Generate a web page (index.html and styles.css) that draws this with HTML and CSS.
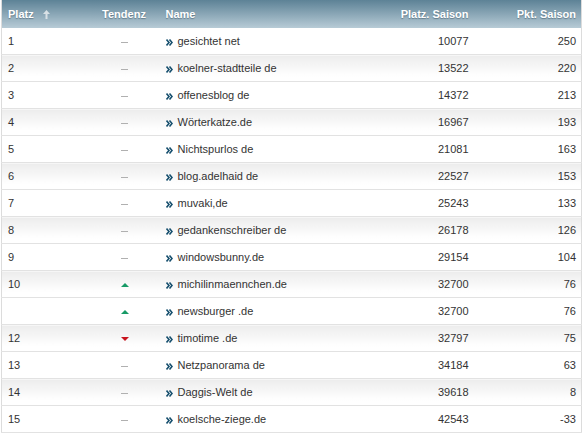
FILE: index.html
```html
<!DOCTYPE html>
<html lang="de">
<head>
<meta charset="utf-8">
<title>Ranking</title>
<link rel="stylesheet" href="styles.css">
</head>
<body>
<table class="rank">
  <colgroup>
    <col class="c-platz"><col class="c-tend"><col class="c-name"><col class="c-ps"><col class="c-pkt">
  </colgroup>
  <thead>
    <tr>
      <th class="left">Platz <svg class="sort" width="7" height="9" viewBox="0 0 7 9"><path d="M3.5 0 L7 4 H4.5 V9 H2.5 V4 H0 Z" fill="#d8e0e5"/></svg></th>
      <th class="center">Tendenz</th>
      <th class="left name-h">Name</th>
      <th class="right">Platz. Saison</th>
      <th class="right">Pkt. Saison</th>
    </tr>
  </thead>
  <tbody>
    <tr><td>1</td><td class="center"><span class="dash"></span></td><td class="name"><span class="go"></span>gesichtet net</td><td class="right">10077</td><td class="right">250</td></tr>
    <tr><td>2</td><td class="center"><span class="dash"></span></td><td class="name"><span class="go"></span>koelner-stadtteile de</td><td class="right">13522</td><td class="right">220</td></tr>
    <tr><td>3</td><td class="center"><span class="dash"></span></td><td class="name"><span class="go"></span>offenesblog de</td><td class="right">14372</td><td class="right">213</td></tr>
    <tr><td>4</td><td class="center"><span class="dash"></span></td><td class="name"><span class="go"></span>Wörterkatze.de</td><td class="right">16967</td><td class="right">193</td></tr>
    <tr><td>5</td><td class="center"><span class="dash"></span></td><td class="name"><span class="go"></span>Nichtspurlos de</td><td class="right">21081</td><td class="right">163</td></tr>
    <tr><td>6</td><td class="center"><span class="dash"></span></td><td class="name"><span class="go"></span>blog.adelhaid de</td><td class="right">22527</td><td class="right">153</td></tr>
    <tr><td>7</td><td class="center"><span class="dash"></span></td><td class="name"><span class="go"></span>muvaki,de</td><td class="right">25243</td><td class="right">133</td></tr>
    <tr><td>8</td><td class="center"><span class="dash"></span></td><td class="name"><span class="go"></span>gedankenschreiber de</td><td class="right">26178</td><td class="right">126</td></tr>
    <tr><td>9</td><td class="center"><span class="dash"></span></td><td class="name"><span class="go"></span>windowsbunny.de</td><td class="right">29154</td><td class="right">104</td></tr>
    <tr><td>10</td><td class="center"><span class="up"></span></td><td class="name"><span class="go"></span>michilinmaennchen.de</td><td class="right">32700</td><td class="right">76</td></tr>
    <tr><td></td><td class="center"><span class="up"></span></td><td class="name"><span class="go"></span>newsburger .de</td><td class="right">32700</td><td class="right">76</td></tr>
    <tr><td>12</td><td class="center"><span class="down"></span></td><td class="name"><span class="go"></span>timotime .de</td><td class="right">32797</td><td class="right">75</td></tr>
    <tr><td>13</td><td class="center"><span class="dash"></span></td><td class="name"><span class="go"></span>Netzpanorama de</td><td class="right">34184</td><td class="right">63</td></tr>
    <tr><td>14</td><td class="center"><span class="dash"></span></td><td class="name"><span class="go"></span>Daggis-Welt de</td><td class="right">39618</td><td class="right">8</td></tr>
    <tr><td>15</td><td class="center"><span class="dash"></span></td><td class="name"><span class="go"></span>koelsche-ziege.de</td><td class="right">42543</td><td class="right">-33</td></tr>
  </tbody>
</table>
</body>
</html>
```

FILE: styles.css
```css
html, body {
  margin: 0;
  padding: 0;
  background: #ffffff;
}
body {
  padding-left: 1px;
  font-family: "Liberation Sans", Arial, Helvetica, sans-serif;
  font-size: 11px;
  color: #333333;
}
.rank {
  width: 580px;
  border-collapse: collapse;
  table-layout: fixed;
  border-left: 1px solid #dcdcdc;
  border-right: 1px solid #dcdcdc;
}
.c-platz { width: 89px; }
.c-tend { width: 67px; }
.c-name { width: 220px; }
.c-ps { width: 96px; }
.c-pkt { width: 108px; }

.rank th {
  height: 28px;
  padding: 0 5px;
  box-sizing: border-box;
  color: #ffffff;
  font-weight: bold;
  font-size: 11px;
  text-shadow: 0 1px 1px rgba(40, 60, 75, 0.45);
  background: linear-gradient(#5d8296, #b7cbd6);
  white-space: nowrap;
}
.rank th.left { text-align: left; padding-left: 6px; }
.rank th.name-h { padding-left: 8px; }
.rank th.center { text-align: center; }
.rank th.right { text-align: right; }
.sort { vertical-align: -1px; margin-left: 6px; }

.rank td {
  height: 26px;
  padding: 0 5px 0 6px;
  border-bottom: 1px solid #e2e2e2;
  white-space: nowrap;
  vertical-align: middle;
}
.rank tbody tr:nth-child(even) td {
  background: linear-gradient(#ececec, #ffffff 80%);
}
.rank td.center { text-align: center; }
.rank td.right { text-align: right; }
.rank td.name { padding-left: 8px; }

.dash {
  display: inline-block;
  width: 7px;
  height: 1px;
  background: #b0b0b0;
  vertical-align: middle;
}
.up, .down {
  display: inline-block;
  width: 0;
  height: 0;
  border-left: 4px solid transparent;
  border-right: 4px solid transparent;
  vertical-align: middle;
}
.up { border-bottom: 4px solid #179a66; }
.down { border-top: 4px solid #c8141e; }
.go {
  display: inline-block;
  width: 7px;
  height: 7px;
  margin-right: 5px;
  vertical-align: -1px;
  background: url("data:image/svg+xml,%3Csvg xmlns='http://www.w3.org/2000/svg' width='7' height='7' viewBox='0 0 7 7'%3E%3Cpath d='M0.5 0.5 L3 3.5 L0.5 6.5 M3.5 0.5 L6 3.5 L3.5 6.5' fill='none' stroke='%23164f6e' stroke-width='1.6'/%3E%3C/svg%3E") no-repeat;
}
```
